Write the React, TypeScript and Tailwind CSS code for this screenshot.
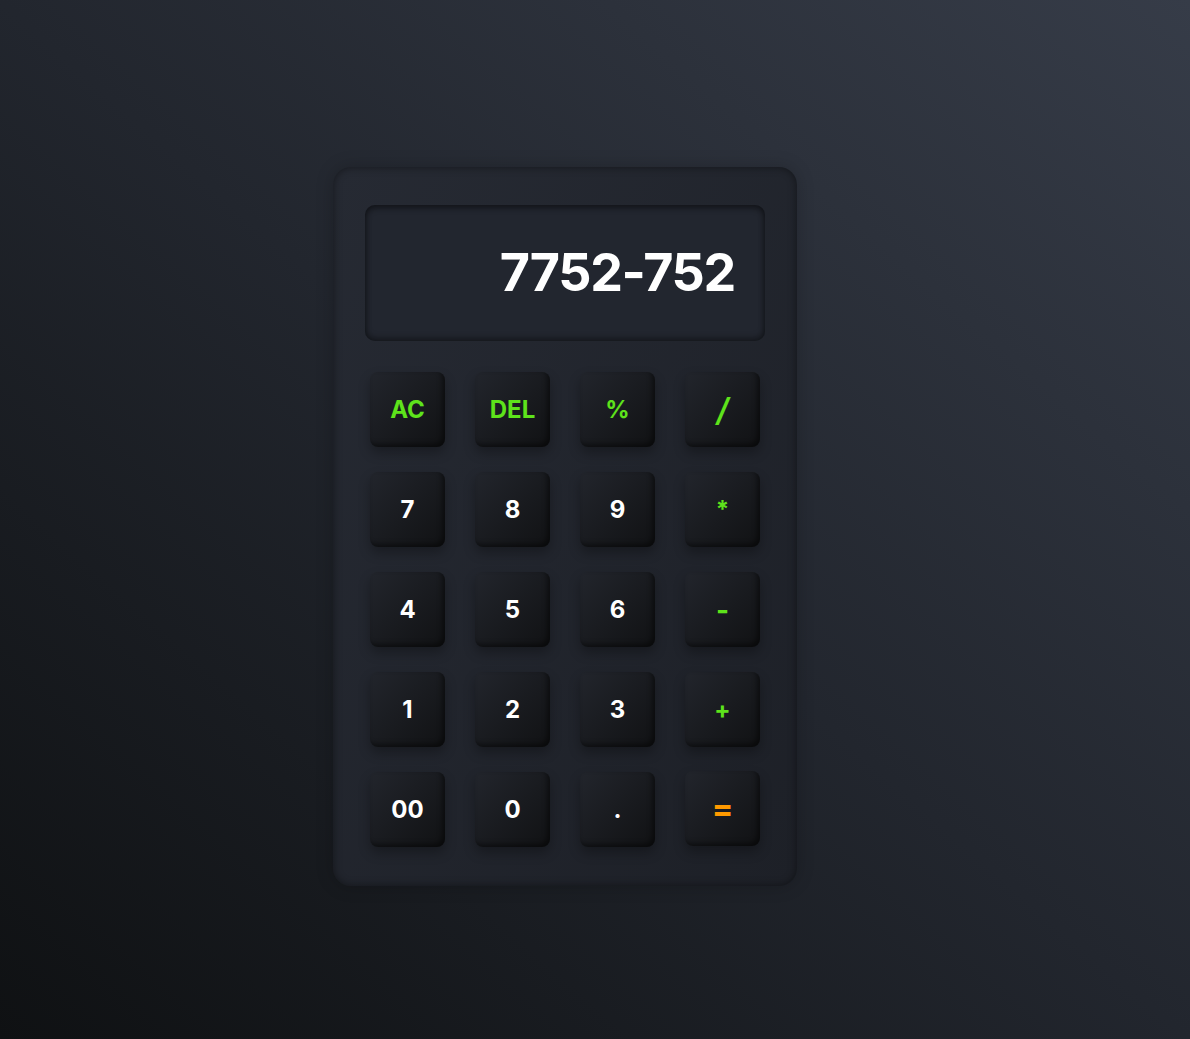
import React, { useState } from 'react';

type Key = { label: string; tone: 'num' | 'op' | 'eq' };

const keys: Key[] = [
    { label: 'AC', tone: 'op' },
    { label: 'DEL', tone: 'op' },
    { label: '%', tone: 'op' },
    { label: '/', tone: 'op' },
    { label: '7', tone: 'num' },
    { label: '8', tone: 'num' },
    { label: '9', tone: 'num' },
    { label: '*', tone: 'op' },
    { label: '4', tone: 'num' },
    { label: '5', tone: 'num' },
    { label: '6', tone: 'num' },
    { label: '-', tone: 'op' },
    { label: '1', tone: 'num' },
    { label: '2', tone: 'num' },
    { label: '3', tone: 'num' },
    { label: '+', tone: 'op' },
    { label: '00', tone: 'num' },
    { label: '0', tone: 'num' },
    { label: '.', tone: 'num' },
    { label: '=', tone: 'eq' },
];

export default function App() {
    const [expr, setExpr] = useState('7752-752');

    const press = (k: string) => {
        if (k === 'AC') return setExpr('');
        if (k === 'DEL') return setExpr(expr.slice(0, -1));
        if (k === '=') {
            try {
                // eslint-disable-next-line no-new-func
                setExpr(String(Function(`return (${expr})`)()));
            } catch {
                setExpr('Error');
            }
            return;
        }
        setExpr(expr + k);
    };

    return (
        <div
            className="min-h-screen w-full flex justify-center pt-[167px] pr-[60px] bg-gradient-to-tr from-[#0f1113] via-[#22262e] to-[#363c48]"
            style={{ fontFamily: 'Inter, "Noto Sans", sans-serif' }}
        >
            <div className="w-[464px] h-[719px] rounded-[18px] bg-gradient-to-br from-[#262a33] to-[#1d2027] px-8 pt-[38px] shadow-[inset_0_0_8px_rgba(0,0,0,0.45),0_0_18px_rgba(0,0,0,0.2)]">
                {/* Display */}
                <div className="h-[136px] rounded-[10px] bg-[#22262f] flex items-center justify-end pr-[30px] shadow-[inset_0_3px_6px_rgba(0,0,0,0.45),inset_0_-3px_6px_rgba(0,0,0,0.35)]">
                    <span className="text-white text-[52px] font-bold tracking-tight leading-none">{expr}</span>
                </div>

                {/* Keys */}
                <div className="grid grid-cols-4 gap-x-[30px] gap-y-[25px] px-[5px] mt-[31px]">
                    {keys.map((k) => (
                        <button
                            key={k.label}
                            onClick={() => press(k.label)}
                            className={`h-[75px] w-[75px] rounded-[8px] flex items-center justify-center bg-gradient-to-br from-[#22252c] to-[#111214] shadow-[0_6px_12px_rgba(0,0,0,0.28),inset_-3px_-3px_5px_rgba(0,0,0,0.45)] text-[24px] font-bold ${
                                k.tone === 'num' ? 'text-white' : k.tone === 'op' ? 'text-[#5ee31b]' : 'text-[#ff9a00] -translate-y-[1px]'
                            }`}
                        >
                            {k.label === '/' ? <span className="text-[32px] font-semibold italic">/</span> : k.label === '=' ? <span className="text-[32px]">=</span> : k.label === '-' ? <span className="text-[28px]">-</span> : k.label}
                        </button>
                    ))}
                </div>
            </div>
        </div>
    );
}
